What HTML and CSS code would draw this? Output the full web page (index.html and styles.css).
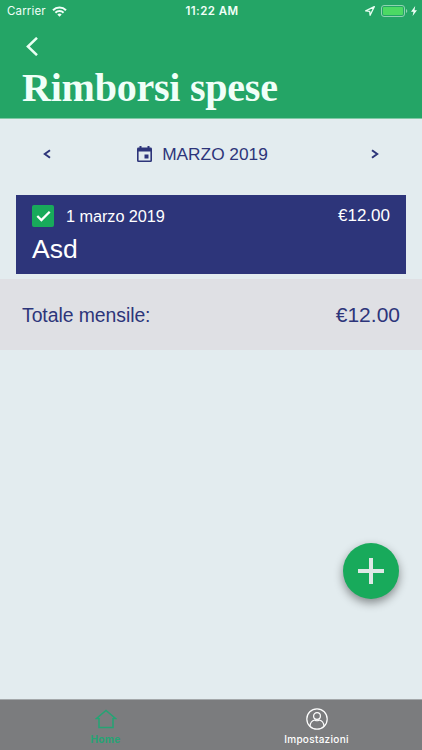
FILE: index.html
```html
<!DOCTYPE html>
<html lang="it">
<head>
<meta charset="utf-8">
<title>Rimborsi spese</title>
<link rel="stylesheet" href="styles.css">
</head>
<body>
<div class="app">
  <header class="header">
    <div class="status">
      <div class="status-left">
        <span class="carrier">Carrier</span>
        <svg width="15" height="11" viewBox="0 0 15 11" fill="none" stroke="#f0fff8" stroke-width="2"><path d="M1 4.2a9.2 9.2 0 0 1 13 0M3.400 6.700a5.800 5.800 0 0 1 8.200 0"/><path d="M7.500 10.700 5.300 8.500a3.100 3.100 0 0 1 4.400 0z" fill="#f0fff8" stroke="none"/></svg>
      </div>
      <span class="time">11:22 AM</span>
      <div class="status-right">
        <svg width="10" height="10" viewBox="0 0 10 10" fill="none" stroke="#e9fff3" stroke-width="1.300" stroke-linejoin="round"><path d="M9.300.700.700 4.900l4 .4.400 4z"/></svg>
        <svg class="battery" width="27" height="12" viewBox="0 0 27 12"><rect x=".5" y=".5" width="23" height="11" rx="2.500" fill="none" stroke="#8fd3b1"/><rect x="2" y="2" width="20" height="8" rx="1" fill="#4cd964"/><path d="M25 4a2.200 2.200 0 0 1 0 4z" fill="#8fd3b1"/></svg>
        <svg class="bolt" width="6" height="10" viewBox="0 0 6 10" fill="#f0fff8"><path d="M4.200 0 0 5.700h2.500L1.600 10 6 4.200H3.500z"/></svg>
      </div>
    </div>
    <svg class="back" width="12" height="19" viewBox="0 0 12 19" fill="none" stroke="#e9fff3" stroke-width="2.500"><path d="M11 .8 1.900 9.500l9.100 8.700"/></svg>
    <h1 class="title">Rimborsi spese</h1>
  </header>
  <main class="main">
    <nav class="month">
      <svg width="8" height="10" viewBox="0 0 8 10" fill="none" stroke="#2d357a" stroke-width="2"><path d="M7 1.200 1.800 5 7 8.800"/></svg>
      <div class="month-label">
        <svg width="15" height="16" viewBox="0 0 15 16" fill="#2d357a"><path fill-rule="evenodd" d="M2.500 0h2v1.600h6V0h2v1.600h1Q15 1.600 15 3v11.500q0 1.500-1.500 1.500h-12Q0 16 0 14.500V3q0-1.400 1.500-1.400h1zM1.600 5.400v9h11.800v-9z"/><path d="M7.500 8.500h4v4h-4z"/></svg>
        <span>MARZO 2019</span>
      </div>
      <svg width="8" height="10" viewBox="0 0 8 10" fill="none" stroke="#2d357a" stroke-width="2"><path d="M1 1.200 6.200 5 1 8.800"/></svg>
    </nav>
    <section class="card">
      <div class="card-top">
        <span class="check"><svg width="15" height="12" viewBox="0 0 15 12" fill="none" stroke="#fff" stroke-width="2.300"><path d="m1.300 6 4.100 4.100 8.300-8.300"/></svg></span>
        <span class="date">1 marzo 2019</span>
        <span class="amount">€12.00</span>
      </div>
      <div class="name">Asd</div>
    </section>
    <section class="total">
      <span class="total-label">Totale mensile:</span>
      <span class="sum">€12.00</span>
    </section>
    <button class="add" aria-label="Aggiungi"><svg width="26" height="26" viewBox="0 0 26 26" stroke="#dfe8e5" stroke-width="4"><path d="M13 0v26M0 13h26"/></svg></button>
  </main>
  <footer class="tabs">
    <div class="tab active">
      <svg width="22" height="22" viewBox="0 0 22 22" fill="none" stroke="#25a474" stroke-width="1.500"><path d="M4 10v9.500h14V10M4 10.500H1.500L11 2.500l9.500 8H18"/></svg>
      <span>Home</span>
    </div>
    <div class="tab">
      <svg width="22" height="22" viewBox="0 0 22 22" fill="none" stroke="#fff" stroke-width="1.200"><circle cx="11" cy="11" r="10.200"/><circle cx="11" cy="8" r="3.400"/><path d="M4 18.300c.3-4.300 2.300-5.800 4.800-6.300q2.200 1.500 4.400 0c2.500.5 4.500 2 4.800 6.300"/></svg>
      <span>Impostazioni</span>
    </div>
  </footer>
</div>
</body>
</html>
```
FILE: styles.css
```css
* { box-sizing: border-box; }
body { margin: 0; font-family: "Liberation Sans", Arial, sans-serif; }
svg { display: block; flex: none; }
span { white-space: nowrap; }
.app { width: 422px; height: 750px; display: flex; flex-direction: column; background: #e3ecef; overflow: hidden; }
.header { height: 119px; background: #24a566; border-bottom: 1px solid #7fc9a5; flex: none; }
.status { display: grid; grid-template-columns: 1fr auto 1fr; align-items: center; height: 22px; padding: 0 5px 0 7px; color: #f0fff8; font-family: Inter, sans-serif; line-height: 22px; }
.status-left, .status-right { display: flex; align-items: center; }
.status-left { gap: 6px; }
.carrier { font-size: 11.5px; letter-spacing: .15px; }
.time { font-size: 11.5px; font-weight: 600; letter-spacing: .45px; }
.status-right { justify-content: flex-end; }
.battery { margin-left: 6px; }
.bolt { margin-left: 3px; }
.back { margin: 15px 0 0 26px; }
.title { margin: 10px 0 0 22px; font: bold 40px/44px "Liberation Serif", serif; letter-spacing: -.23px; color: #f0fff8; white-space: nowrap; }
.main { flex: 1; position: relative; color: #2d357a; }
.month { height: 76px; padding: 0 43px 6px; display: flex; align-items: center; justify-content: space-between; }
.month-label { display: flex; align-items: center; gap: 10px; font-size: 17.3px; margin-left: -17px; }
.card { height: 79px; margin: 0 16px; padding: 10px 16px 0; background: #2d357a; color: #fff; }
.card-top { display: flex; align-items: center; height: 22px; }
.check { width: 22px; height: 22px; border-radius: 2px; background: #18aa5b; display: flex; align-items: center; justify-content: center; }
.date { margin-left: 12px; font-size: 16.3px; letter-spacing: -.06px; }
.amount { margin-left: auto; font-size: 17px; }
.name { margin-top: 7px; font-size: 26.5px; line-height: 30px; }
.total { height: 71px; margin-top: 5px; padding: 0 22px; display: flex; align-items: center; justify-content: space-between; background: #dfe0e4; }
.total-label { margin-top: 1px; font-size: 19.4px; letter-spacing: -.06px; }
.sum { font-size: 21px; }
.add { position: absolute; right: 23px; bottom: 100px; width: 56px; height: 56px; padding: 0; border: 0; border-radius: 50%; background: #18aa5b; display: flex; align-items: center; justify-content: center; box-shadow: 0 4px 10px rgba(0, 0, 0, .42); }
.tabs { height: 51px; flex: none; display: grid; grid-template-columns: 1fr 1fr; background: #7b7c7e; border-top: 1px solid #a4a8aa; }
.tab { display: flex; flex-direction: column; align-items: center; padding-top: 8px; color: #fff; font: 500 10px/12px Inter, sans-serif; letter-spacing: .3px; }
.tab span { margin-top: 3px; }
.active { color: #25a474; }
.active span { font-weight: 700; }
```
